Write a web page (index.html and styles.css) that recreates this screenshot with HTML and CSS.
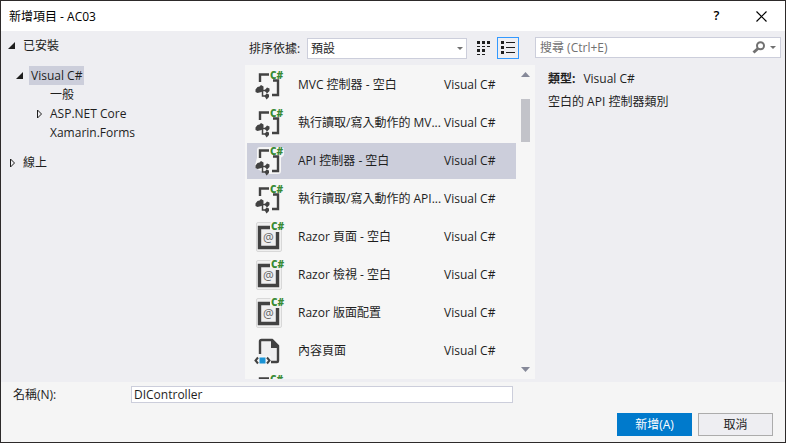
FILE: index.html
```html
<!DOCTYPE html>
<html lang="zh-Hant">
<head>
<meta charset="utf-8">
<title>新增項目 - AC03</title>
<link rel="stylesheet" href="styles.css">
</head>
<body>
<svg class="defs" aria-hidden="true">
  <symbol id="controller" viewBox="0 0 32 32">
    <path class="halo" d="M6 13V5h21v4l-3 2v15h-11l-9-5z"/>
    <path class="line" d="M6 13V5.500h9M19 11.500h5V26h-6"/>
    <path class="ink" d="M1.500 20.500l2-2.500 2-.5L7 16l2.500 1.500v3L7.500 23l-4 1-2-1z"/>
    <path class="link" d="M7 21.500h6M8.500 21.500v5.500h4"/>
    <path class="ink" d="M10.500 21.500l2.500-3 2.500 1V22L13 24.500zM10.500 27l2-2.500 2.500 1V28l-2.500 2.500z"/>
  </symbol>
  <symbol id="razor" viewBox="0 0 32 32">
    <rect class="plate" x="2.500" y="1.500" width="25" height="29" rx="1.500"/>
    <path class="fill" d="M6 6h18v21H6z"/>
    <path class="frame" d="M16 6.500H5.500V26.500h18V11"/>
    <path class="gap" d="M16.500 1h14v8h-14z"/>
  </symbol>
  <symbol id="content" viewBox="0 0 32 32">
    <path class="fill" d="M6 6h12l6 6v15H6z"/>
    <path class="line" d="M6 19V6.500Q6 5 7.500 5H18l6 6v15q0 1-1 1h-6"/>
    <path class="ink" d="M17 4.500h2l6 6V13h-8z"/>
    <path class="gap" d="M0 21h17v8H0z"/>
    <path class="blue" d="M5.500 22.500h6v6h-6z"/>
    <path class="tag" d="M4 22.500L1.500 25.500 4 28.500M13 22.500l2.500 3-2.500 3"/>
  </symbol>
</svg>
<div class="dialog">
  <header class="titlebar">
    <h1>新增項目 - AC03</h1>
    <button class="caption help" aria-label="說明">?</button>
    <button class="caption" aria-label="關閉"><svg width="11" height="11" viewBox="0 0 11 11"><path d="M.5.5l10 10M10.500.5l-10 10" stroke="#000" stroke-width="1.200"/></svg></button>
  </header>
  <main class="body">
    <nav class="tree">
      <ul>
        <li class="row"><button class="twisty" aria-label="摺疊"><svg viewBox="0 0 8 8"><path d="M7 0v7H0z" fill="#1e1e1e"/></svg></button><span class="node">已安裝</span></li>
        <li class="group">
          <ul>
            <li class="row level1"><button class="twisty" aria-label="摺疊"><svg viewBox="0 0 8 8"><path d="M7 0v7H0z" fill="#1e1e1e"/></svg></button><span class="node selected">Visual C#</span></li>
            <li class="row level2"><span class="twisty"></span><span class="node">一般</span></li>
            <li class="row level2"><button class="twisty" aria-label="展開"><svg viewBox="0 0 8 8"><path d="M2.500 0v8L6.500 4z" fill="none" stroke="#1e1e1e"/></svg></button><span class="node">ASP.NET Core</span></li>
            <li class="row level2"><span class="twisty"></span><span class="node">Xamarin.Forms</span></li>
          </ul>
        </li>
        <li class="row"><button class="twisty" aria-label="展開"><svg viewBox="0 0 8 8"><path d="M2.500 0v8L6.500 4z" fill="none" stroke="#1e1e1e"/></svg></button><span class="node">線上</span></li>
      </ul>
    </nav>
    <section class="templates">
      <div class="toolbar">
        <label for="sort">排序依據:</label>
        <div class="combo">
          <select id="sort"><option>預設</option></select>
          <svg class="arrow" width="6" height="3" viewBox="0 0 6 3"><path d="M0 0h6L3 3z" fill="#717171"/></svg>
        </div>
        <button class="view" aria-label="小圖示"><svg width="14" height="14" viewBox="0 0 14 14"><path d="M1 0h3v3H1zM6 0h3v3H6zM11 0h3v3h-3zM1 5h3v1H1zM6 5h3v1H6zM11 5h3v1h-3zM1 8h3v3H1zM6 8h3v3H6zM1 13h3v1H1zM6 13h3v1H6z" fill="#1e1e1e"/></svg></button>
        <button class="view active" aria-label="清單"><svg width="14" height="14" viewBox="0 0 14 14"><path d="M0 0h3v3H0zM0 5h3v3H0zM0 10h3v3H0zM5 1h9v1H5zM5 6h9v1H5zM5 11h9v1H5z" fill="#1e1e1e"/></svg></button>
      </div>
      <div class="listbox">
        <ul class="items">
          <li><svg class="icon" viewBox="0 0 32 32"><use href="#controller"/><text class="cs" x="16" y="10">C#</text></svg><span class="name">MVC 控制器 - 空白</span><span>Visual C#</span></li>
          <li><svg class="icon" viewBox="0 0 32 32"><use href="#controller"/><text class="cs" x="16" y="10">C#</text></svg><span class="name">執行讀取/寫入動作的 MV...</span><span>Visual C#</span></li>
          <li class="current"><svg class="icon" viewBox="0 0 32 32"><use href="#controller"/><text class="cs" x="16" y="10">C#</text></svg><span class="name">API 控制器 - 空白</span><span>Visual C#</span></li>
          <li><svg class="icon" viewBox="0 0 32 32"><use href="#controller"/><text class="cs" x="16" y="10">C#</text></svg><span class="name">執行讀取/寫入動作的 API...</span><span>Visual C#</span></li>
          <li><svg class="icon" viewBox="0 0 32 32"><use href="#razor"/><text class="at" x="9" y="21">@</text><text class="cs" x="17" y="9">C#</text></svg><span class="name">Razor 頁面 - 空白</span><span>Visual C#</span></li>
          <li><svg class="icon" viewBox="0 0 32 32"><use href="#razor"/><text class="at" x="9" y="21">@</text><text class="cs" x="17" y="9">C#</text></svg><span class="name">Razor 檢視 - 空白</span><span>Visual C#</span></li>
          <li><svg class="icon" viewBox="0 0 32 32"><use href="#razor"/><text class="at" x="9" y="21">@</text><text class="cs" x="17" y="9">C#</text></svg><span class="name">Razor 版面配置</span><span>Visual C#</span></li>
          <li><svg class="icon" viewBox="0 0 32 32"><use href="#content"/></svg><span class="name">內容頁面</span><span>Visual C#</span></li>
          <li><svg class="icon" viewBox="0 0 32 32"><use href="#controller"/><text class="cs" x="16" y="10">C#</text></svg></li>
        </ul>
        <div class="scrollbar">
          <svg width="9" height="5" viewBox="0 0 9 5"><path d="M0 5h9L4.500 0z" fill="#868999"/></svg>
          <div class="track"><div class="thumb"></div></div>
          <svg width="9" height="5" viewBox="0 0 9 5"><path d="M0 0h9L4.500 5z" fill="#868999"/></svg>
        </div>
      </div>
    </section>
    <aside class="details">
      <div class="search">
        <input type="text" aria-label="搜尋" placeholder="搜尋 (Ctrl+E)">
        <button class="find" aria-label="搜尋"><svg width="14" height="13" viewBox="0 0 14 13"><circle cx="8.500" cy="4.800" r="3.500" fill="none" stroke="#717171" stroke-width="2"/><path d="M6 7.500L1.500 11.500" stroke="#717171" stroke-width="3"/></svg></button>
        <button class="find" aria-label="搜尋選項"><svg width="6" height="3" viewBox="0 0 6 3"><path d="M0 0h6L3 3z" fill="#717171"/></svg></button>
      </div>
      <p><b>類型:</b>Visual C#</p>
      <p>空白的 API 控制器類別</p>
    </aside>
  </main>
  <footer class="footer">
    <div class="field">
      <label for="name">名稱(N):</label>
      <input id="name" type="text" value="DIController">
    </div>
    <div class="actions">
      <button class="primary">新增(A)</button>
      <button>取消</button>
    </div>
  </footer>
</div>
</body>
</html>
```

FILE: styles.css
```css
* { box-sizing: border-box; }
body {
  margin: 0;
  font: 12px/19px "Open Sans", "Noto Sans CJK TC", sans-serif;
  color: #1e1e1e;
}
button, input, select { font: inherit; color: inherit; margin: 0; }
button { padding: 0; border: 0; background: none; }
ul { list-style: none; margin: 0; padding: 0; }
svg { display: block; flex: none; }
.defs { position: absolute; width: 0; height: 0; }
.dialog {
  display: flex;
  flex-direction: column;
  height: 100vh;
  border: 1px solid #2d2a2a;
  background: #f5f5f5;
}
.titlebar {
  display: flex;
  align-items: center;
  height: 30px;
  padding: 0 1px 0 8px;
  background: #fff;
  color: #000;
}
.titlebar h1 { flex: 1; margin: 0; font-size: 12px; font-weight: 400; }
.caption { display: grid; place-items: center; width: 45px; height: 30px; }
.help { font-size: 13px; font-weight: 600; line-height: 26px; padding-bottom: 2px; }
.body {
  flex: 1;
  min-height: 0;
  display: grid;
  grid-template-columns: 244px minmax(0, 1fr) 250px;
  grid-template-rows: minmax(0, 1fr);
  background: #eeeef2;
}

.tree { padding: 5px 0 0 7px; }
.row { display: flex; align-items: center; height: 19px; }
.group { padding: 11px 0; }
.level1 { padding-left: 8px; }
.level2 { padding-left: 27px; }
.twisty { width: 8px; height: 8px; margin-right: 5px; }
.twisty svg { width: 8px; height: 8px; }
.node { padding: 0 2px; }
.selected { background: #cccedb; }

.templates { display: flex; flex-direction: column; min-width: 0; padding-bottom: 3px; }
.toolbar { display: flex; align-items: center; height: 34px; padding: 0 16px 0 4px; }
.toolbar label { width: 58px; white-space: nowrap; }
.combo { position: relative; flex: 1; }
.combo select {
  appearance: none;
  display: block;
  width: 100%;
  height: 21px;
  padding: 0 3px;
  border: 1px solid #cccedb;
  border-radius: 0;
  background: #fff;
}
.arrow { position: absolute; right: 4px; top: 9px; }
.view { display: grid; place-items: center; width: 22px; height: 22px; margin-left: 3px; border: 1px solid transparent; }
.combo + .view { margin-left: 5px; }
.active { border-color: #3399ff; }
.listbox { flex: 1; min-height: 0; display: flex; background: #f6f6f6; }
.items {
  flex: 1;
  min-width: 0;
  display: flex;
  flex-direction: column;
  gap: 2px;
  padding: 2px 0 0 2px;
  overflow: hidden;
}
.items li {
  flex: none;
  display: grid;
  grid-template-columns: 44px minmax(0, 1fr) 72px;
  align-items: center;
  height: 36px;
  padding: 0 0 1px 7px;
}
.items .current { background: #cccedb; }
.name { overflow: hidden; white-space: nowrap; text-overflow: ellipsis; }
.icon { width: 32px; height: 32px; overflow: visible; }
.scrollbar { width: 19px; display: flex; flex-direction: column; align-items: center; padding: 7px 0; }
.track { flex: 1; padding-top: 22px; }
.thumb { width: 9px; height: 43px; background: #c2c3c9; }

.line { fill: none; stroke: #424242; stroke-width: 2.4; }
.link { fill: none; stroke: #424242; stroke-width: 1.5; }
.frame { fill: none; stroke: #424242; stroke-width: 3.4; }
.tag { fill: none; stroke: #424242; stroke-width: 2; }
.ink { fill: #424242; }
.fill { fill: #efeff0; }
.gap { fill: #f6f6f6; }
.blue { fill: #1b93d4; }
.plate { fill: #f0f0f0; stroke: #d8d8d8; }
.halo { fill: #f6f6f6; stroke: #f6f6f6; stroke-width: 6; stroke-linejoin: round; }
.cs { font: 800 10px "Open Sans", sans-serif; fill: #388a34; }
.at { font: 12px "Open Sans", sans-serif; fill: #686868; }

.details { padding: 6px 4px 0 0; }
.search { display: flex; align-items: center; height: 21px; margin-bottom: 11px; border: 1px solid #cccedb; background: #fff; }
.search input { flex: 1; min-width: 0; padding: 0 4px; border: 0; background: none; outline: 0; }
.search input::placeholder { color: #717171; opacity: 1; }
.find { padding-right: 4px; }
.details p { margin: 0 0 4px 13px; }
.details b { margin-right: 8px; }

.footer { padding: 4px 12px 6px; }
.field { display: flex; align-items: center; height: 17px; }
.field label { width: 118px; }
.field input { width: 382px; height: 17px; padding: 0 2px; border: 1px solid #cccedb; background: #fff; outline: 0; }
.actions { display: flex; justify-content: flex-end; gap: 6px; margin-top: 10px; }
.actions button { width: 75px; height: 23px; border: 1px solid #acacac; background: #eeeef2; }
.actions .primary { border-color: #007acc; background: #007acc; color: #fff; }
```
